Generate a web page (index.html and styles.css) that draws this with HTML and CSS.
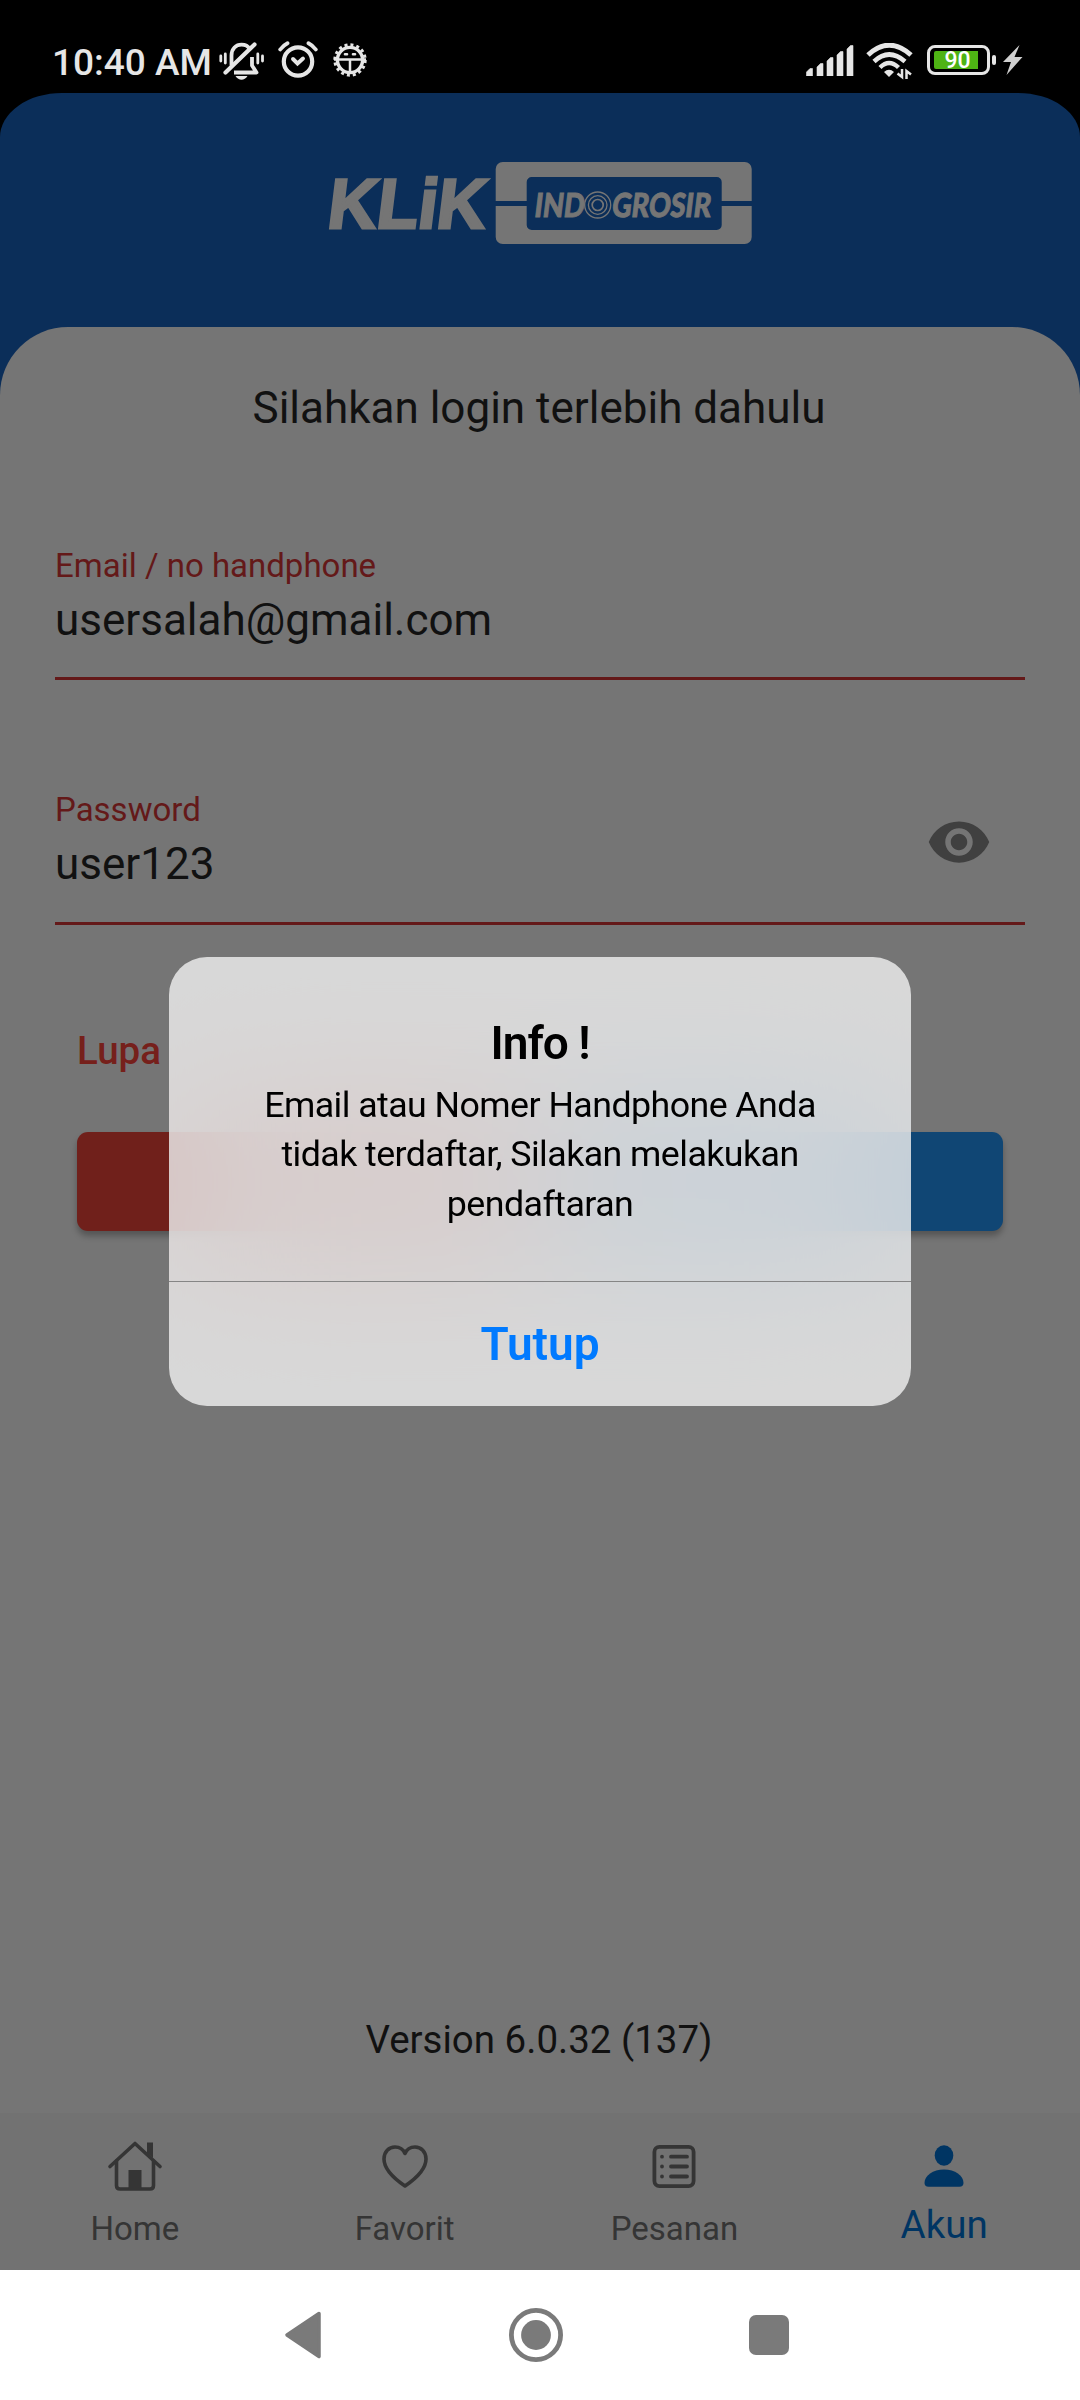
FILE: index.html
```html
<!DOCTYPE html>
<html lang="id">
<head>
<meta charset="utf-8">
<title>Klik Indogrosir</title>
<link rel="stylesheet" href="styles.css">
</head>
<body>
<div class="phone">
  <header class="status">
    <div class="status-left">
      <span class="clock">10:40 AM</span>
      <svg class="ic-bell" width="46" height="40" viewBox="0 0 46 40" fill="none" stroke="#e6e6e6">
        <path d="M12.500 24.500 V14.500 C12.500 7.500 17 3.700 22.500 3.700 C26 3.700 29 5 30.500 8 M33 16 V24.500 L37.500 31.500 H15" stroke-width="3.800" stroke-linejoin="round"/>
        <path d="M6.500 31.500 L35.500 3.500" stroke-width="4.200" stroke-linecap="round"/>
        <path d="M16.500 35 H28.500 Q26 38.800 22.500 38.800 Q19 38.800 16.500 35Z" fill="#e6e6e6" stroke="none"/>
        <path d="M1.800 15 v5 M6.300 13 v9 M38.800 13 v9 M43.500 15 v5" stroke-width="2.800" stroke-linecap="round"/>
      </svg>
      <svg class="ic-alarm" width="40" height="38" viewBox="0 0 40 38" fill="none" stroke="#e6e6e6" stroke-linecap="round">
        <circle cx="20" cy="20.500" r="14.200" stroke-width="4.200"/>
        <path d="M2.200 8.500 Q5 4.500 9.500 2.200 M37.800 8.500 Q35 4.500 30.500 2.200" stroke-width="3.800"/>
        <path d="M15 18 L19.500 22.500 L25 17.500" stroke-width="3.900"/>
      </svg>
      <svg class="ic-bug" width="34" height="34" viewBox="0 0 34 34" fill="none" stroke="#e6e6e6">
        <circle cx="17" cy="17" r="15.200" stroke-width="3" stroke-dasharray="3 2.968"/>
        <circle cx="17" cy="17" r="12.600" stroke-width="3.400"/>
        <path d="M1 16.500 H33 M17 16.500 V31" stroke-width="2.500"/>
        <path d="M12 11.200h2 M20 11.200h2" stroke-width="2.600" stroke-linecap="round"/>
      </svg>
    </div>
    <div class="status-right">
      <svg width="48" height="31" viewBox="0 0 48 31" fill="#e6e6e6">
        <path d="M.5 31V27L4 23.500H6.500V31Z M11 31V22L14.500 18.500H17V31Z M21 31V16L24.500 12.500H27V31Z M31 31V10L34.500 6.500H37V31Z M41 31V4L44.500 .500H47V31Z" stroke="#e6e6e6" stroke-width=".6" stroke-linejoin="round"/>
      </svg>
      <svg class="ic-wifi" width="48" height="37" viewBox="0 0 48 37" fill="none" stroke="#e6e6e6">
        <path d="M2 12 Q23 -7.500 45 12" stroke-width="5"/>
        <path d="M8 18.500 Q23 4.500 39 18.500" stroke-width="4.600"/>
        <path d="M14 24.500 Q23 15.500 32.500 24.500" stroke-width="4.400"/>
        <path d="M18 29 Q23 24.500 28 29 L23 34Z" fill="#e6e6e6" stroke="none"/>
        <path d="M36 26 V34 L31.500 30.500 M40.500 36 V28 L45 31.500" stroke-width="2.500"/>
      </svg>
      <div class="battery"><span class="battery-fill"></span><span class="battery-num">90</span></div>
      <span class="battery-tip"></span>
      <svg class="ic-bolt" width="20" height="30" viewBox="0 0 20 30"><path d="M16.500 0 L0 17 H8 L3.500 30 L19.500 12 H11.500Z" fill="#d0d0d0"/></svg>
    </div>
  </header>

  <div class="app">
    <div class="brand">
      <svg class="logo" width="426" height="84" viewBox="0 0 426 84">
        <g fill="#757575" stroke="#757575" font-weight="700">
          <text transform="translate(-1 67.300) skewX(-7)" font-family="Liberation Sans, sans-serif" font-size="70" textLength="158" lengthAdjust="spacingAndGlyphs" stroke-width="3">KLiK</text>
          <path stroke="none" transform="translate(.7 0)" fill-rule="evenodd" d="M175 1H417a7 7 0 0 1 7 7V40H394V21a5 5 0 0 0-5-5H204a5 5 0 0 0-5 5V40H168V8a7 7 0 0 1 7-7Z M168 45H199V64a5 5 0 0 0 5 5H389a5 5 0 0 0 5-5V45H424V76a7 7 0 0 1-7 7H175a7 7 0 0 1-7-7Z"/>
          <g font-family="Lato, sans-serif" font-weight="900" font-size="33" stroke-width="1">
            <text transform="translate(206.500 55.700) skewX(-7)" textLength="50" lengthAdjust="spacingAndGlyphs">IND</text>
            <text transform="translate(284 55.700) skewX(-7)" textLength="99" lengthAdjust="spacingAndGlyphs">GROSIR</text>
          </g>
        </g>
        <g fill="none" stroke="#757575" stroke-width="1.300"><circle cx="270.700" cy="44" r="13"/><circle cx="270.700" cy="44" r="9.300"/><circle cx="270.700" cy="44" r="5.500" stroke-width="1.700"/></g>
      </svg>
    </div>

    <main class="sheet">
      <h1 class="heading">Silahkan login terlebih dahulu</h1>
      <div class="field">
        <label class="label">Email / no handphone</label>
        <div class="value">usersalah@gmail.com</div>
      </div>
      <div class="field password">
        <label class="label">Password</label>
        <div class="value">user123</div>
        <svg class="eye" width="66" height="66" viewBox="0 0 24 24"><path fill="#404040" d="M12 4.500C7 4.500 2.730 7.610 1 12c1.730 4.390 6 7.500 11 7.500s9.270-3.110 11-7.500c-1.730-4.390-6-7.500-11-7.500zM12 17c-2.760 0-5-2.240-5-5s2.240-5 5-5 5 2.240 5 5-2.240 5-5 5zm0-8c-1.660 0-3 1.340-3 3s1.340 3 3 3 3-1.340 3-3-1.340-3-3-3z"/></svg>
      </div>
      <div class="forgot">Lupa</div>
      <div class="actions"><div class="btn btn-red"></div><div class="btn btn-blue"></div></div>
      <div class="version">Version 6.0.32 (137)</div>
    </main>

    <nav class="tabs">
      <div class="tab">
        <svg width="56" height="56" viewBox="0 0 56 56" fill="none" stroke="#353535" stroke-width="3.600" stroke-linecap="round" stroke-linejoin="round">
          <path d="M3 29.500 L28 6.500 L53 29.500"/><path d="M9.500 24 V48.500 Q9.500 52 13 52 H43 Q46.500 52 46.500 48.500 V24"/>
          <path d="M21.500 33 H34.500 V52 H21.500Z M40 5.500 H46 V21 L40 16Z" fill="#353535" stroke="none"/>
        </svg>
        <span>Home</span>
      </div>
      <div class="tab">
        <svg width="56" height="56" viewBox="0 0 56 56" fill="none" stroke="#353535" stroke-width="3.600" stroke-linejoin="round">
          <path d="M28 49 C14 39.500 7 31 7 22 C7 14.500 12 10 18 10 C23 10 26.500 13 28 16.500 C29.500 13 33 10 38 10 C44 10 49 14.500 49 22 C49 31 42 39.500 28 49Z"/>
        </svg>
        <span>Favorit</span>
      </div>
      <div class="tab">
        <svg width="56" height="56" viewBox="0 0 56 56" fill="none" stroke="#353535" stroke-width="3.800" stroke-linecap="round">
          <rect x="8.400" y="9.900" width="39.200" height="39.200" rx="5"/>
          <path d="M25 19.700H41 M25 29.500H41 M25 39.500H41"/><path d="M16 19.700h.01 M16 29.500h.01 M16 39.500h.01"/>
        </svg>
        <span>Pesanan</span>
      </div>
      <div class="tab active">
        <svg width="56" height="56" viewBox="0 0 56 56" fill="#003563"><ellipse cx="28" cy="18.500" rx="9.300" ry="10.200"/><path d="M8.500 46 C8.500 38.500 17 32.500 28 32.500 C39 32.500 47.500 38.500 47.500 46 Q47.500 49.700 43.500 49.700 H12.500 Q8.500 49.700 8.500 46Z"/></svg>
        <span>Akun</span>
      </div>
    </nav>
  </div>

  <footer class="sysnav">
    <svg width="38" height="54" viewBox="0 0 38 54"><path d="M35 5.500 L3 27 L35 48.500Z" fill="#7a7a7a" stroke="#7a7a7a" stroke-width="3.500" stroke-linejoin="round"/></svg>
    <svg width="54" height="54" viewBox="0 0 54 54"><circle cx="27" cy="27" r="24.600" fill="none" stroke="#7a7a7a" stroke-width="4.800"/><circle cx="27" cy="27" r="14.900" fill="#7a7a7a"/></svg>
    <span class="recent"></span>
  </footer>

  <div class="dialog">
    <div class="dialog-body">
      <h2 class="dialog-title">Info !</h2>
      <p class="dialog-text">Email atau Nomer Handphone Anda<br>tidak terdaftar, Silakan melakukan<br>pendaftaran</p>
    </div>
    <div class="dialog-action">Tutup</div>
  </div>
</div>
</body>
</html>
```

FILE: styles.css
```css
* { box-sizing: border-box; }
body { margin: 0; background: #000; font-family: Roboto, sans-serif; }
.phone { position: relative; width: 1080px; height: 2400px; display: flex; flex-direction: column; overflow: hidden; }

.status { height: 93px; display: flex; justify-content: space-between; padding: 0 57px 0 52px; color: #e6e6e6; }
.status-left { display: flex; align-items: flex-start; padding-top: 41px; }
.clock { width: 167px; padding-top: 1px; font-size: 37px; font-weight: 500; line-height: 42px; white-space: nowrap; }
.ic-alarm { margin-left: 13px; }
.ic-bug { margin: 2px 0 0 15px; }
.status-right { display: flex; align-items: flex-start; padding-top: 45px; }
.ic-wifi { margin: -2px 0 0 12px; }
.battery { position: relative; width: 63px; height: 30px; margin-left: 13px; border: 3px solid #e6e6e6; border-radius: 8px; padding: 3px 4px; }
.battery-fill { display: block; width: 44px; height: 18px; background: #4eb314; border-radius: 2px 0 0 2px; }
.battery-num { position: absolute; left: 0; right: 2px; top: 0; text-align: center; font-size: 23px; line-height: 25px; font-weight: 500; color: #fff; }
.battery-tip { width: 4px; height: 10px; margin: 10px 0 0 2px; border-radius: 2px; background: #e6e6e6; }
.ic-bolt { margin: 0 0 0 7px; }

.app { height: 2177px; display: flex; flex-direction: column; background: #0b2e59; border-radius: 62px 62px 0 0 / 44px 44px 0 0; overflow: hidden; }
.brand { height: 234px; display: flex; justify-content: center; padding-top: 68px; }
.logo { overflow: visible; }
.sheet { height: 1786px; display: flex; flex-direction: column; padding: 55px 55px 0; background: #757575; border-radius: 68px 68px 0 0; color: #111; }
.heading { margin: 0 0 110px; padding-right: 2px; font-size: 44px; line-height: 52px; font-weight: 400; text-align: center; }
.field { position: relative; height: 136px; margin-bottom: 109px; border-bottom: 3px solid #641919; }
.label { display: block; font-size: 33px; line-height: 40px; padding-top: 2px; color: #641919; }
.password .label { padding-top: 1px; }
.value { font-size: 44px; line-height: 52px; margin-top: 8px; }
.eye { position: absolute; right: 33px; top: 20px; }
.forgot { margin: -6px 22px 0; font-size: 38.500px; line-height: 46px; font-weight: 500; color: #76201b; }
.actions { display: flex; gap: 22px; margin: 58px 22px 0; }
.btn { flex: 1; height: 99px; border-radius: 11px; box-shadow: 0 5px 6px rgba(0,0,0,.28); }
.btn-red { background: #70201b; }
.btn-blue { background: #104674; }
.version { margin-top: auto; padding: 0 2px 50px 0; font-size: 38.500px; line-height: 46px; text-align: center; }

.tabs { height: 157px; display: flex; padding-right: 1px; background: #727272; }
.tab { flex: 1; display: flex; flex-direction: column; align-items: center; padding-top: 24px; font-size: 33px; line-height: 40px; color: #353535; }
.tab span { margin-top: 16px; }
.tab.active { font-size: 38.500px; color: #003563; }
.tab.active span { margin-top: 12px; }

.sysnav { height: 130px; display: flex; align-items: center; padding-left: 284px; background: #fff; }
.sysnav svg + svg { margin-left: 187px; }
.recent { width: 40px; height: 40px; margin-left: 186px; border-radius: 7px; background: #7a7a7a; }

.dialog { position: absolute; left: 169px; top: 957px; width: 742px; height: 449px; border-radius: 38px; overflow: hidden; background: rgba(250,250,250,.75); -webkit-backdrop-filter: blur(80px); backdrop-filter: blur(80px); color: #000; text-align: center; }
.dialog-body { height: 325px; padding-top: 59px; border-bottom: 1px solid #858585; }
.dialog-title { margin: 0; font-size: 46px; line-height: 54px; font-weight: 600; letter-spacing: -1px; }
.dialog-text { margin: 11px 0 0; font-size: 35.750px; line-height: 49.300px; letter-spacing: -.56px; }
.dialog-action { height: 124px; font-size: 46px; line-height: 125px; font-weight: 600; color: #007aff; }
```
